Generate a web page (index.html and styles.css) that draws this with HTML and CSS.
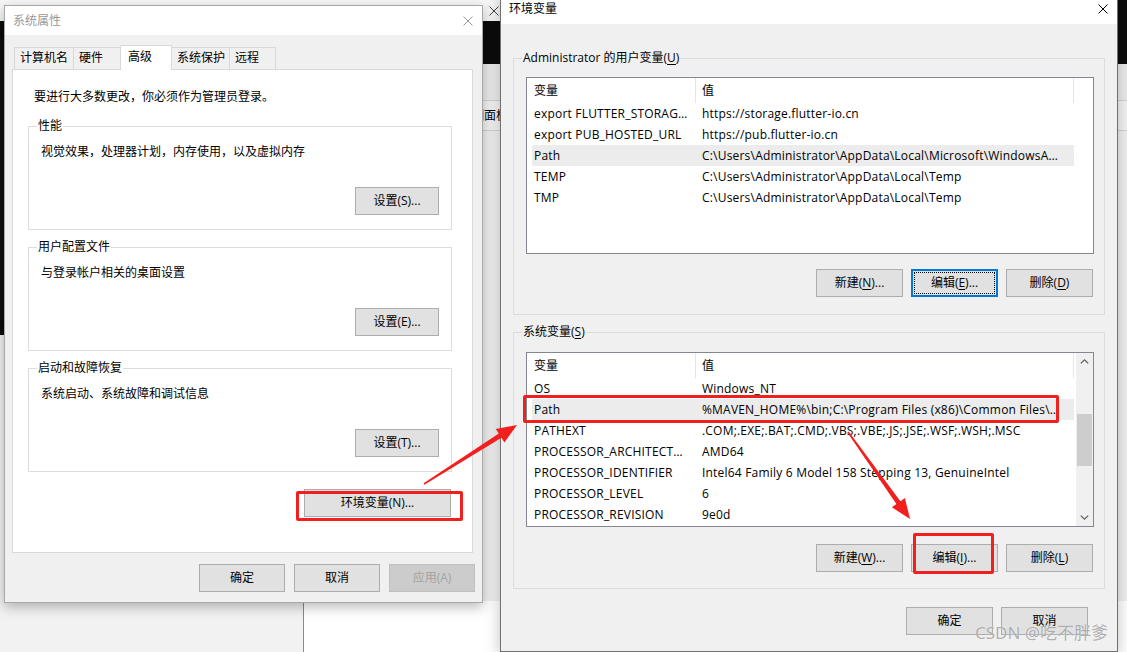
FILE: index.html
```html
<!DOCTYPE html>
<html lang="zh-CN">
<head>
  <meta charset="UTF-8">
  <title>环境变量</title>
  <link rel="stylesheet" href="styles.css">
</head>
<body>
  <!-- windows behind the dialogs -->
  <div class="bg-top">
    <svg class="x-icon" viewBox="0 0 10 10"><path d="M0.5 0.5L9.5 9.5M9.5 0.5L0.5 9.5" stroke="currentColor" fill="none"/></svg>
  </div>
  <div class="bg-band"></div>
  <div class="bg-console"></div>
  <div class="bg-corner"></div>
  <div class="bg-explorer">
    <div class="explorer-bar"></div>
    <div class="explorer-crumb">控制面板</div>
    <div class="explorer-side"></div>
  </div>

  <!-- 系统属性 -->
  <div class="dialog sysprop">
    <div class="titlebar">
      <span class="title">系统属性</span>
      <svg class="x-icon" viewBox="0 0 10 10"><path d="M0.5 0.5L9.5 9.5M9.5 0.5L0.5 9.5" stroke="currentColor" fill="none"/></svg>
    </div>
    <div class="dlg-body">
      <div class="tabs">
        <div class="tab" style="width:60px">计算机名</div>
        <div class="tab" style="width:48px">硬件</div>
        <div class="tab active" style="width:52px">高级</div>
        <div class="tab" style="width:59px">系统保护</div>
        <div class="tab" style="width:47px">远程</div>
      </div>
      <div class="tab-panel">
        <div class="note">要进行大多数更改，你必须作为管理员登录。</div>

        <div class="group">
          <span class="group-label">性能</span>
          <div class="group-text">视觉效果，处理器计划，内存使用，以及虚拟内存</div>
          <button class="btn">设置(S)...</button>
        </div>

        <div class="group">
          <span class="group-label">用户配置文件</span>
          <div class="group-text">与登录帐户相关的桌面设置</div>
          <button class="btn">设置(E)...</button>
        </div>

        <div class="group">
          <span class="group-label">启动和故障恢复</span>
          <div class="group-text">系统启动、系统故障和调试信息</div>
          <button class="btn">设置(T)...</button>
        </div>

        <div class="env-row">
          <button class="btn btn-env">环境变量(N)...</button>
        </div>
      </div>
      <div class="dlg-buttons">
        <button class="btn">确定</button>
        <button class="btn">取消</button>
        <button class="btn" disabled>应用(A)</button>
      </div>
    </div>
  </div>

  <!-- 环境变量 -->
  <div class="dialog envvars">
    <div class="titlebar">
      <span class="title">环境变量</span>
      <svg class="x-icon" viewBox="0 0 10 10"><path d="M0.5 0.5L9.5 9.5M9.5 0.5L0.5 9.5" stroke="currentColor" fill="none"/></svg>
    </div>
    <div class="dlg-body">
      <div class="var-group">
        <span class="group-label">Administrator 的用户变量(<u>U</u>)</span>
        <div class="listview">
          <div class="lv-main">
            <div class="lv-head"><span class="cell c-name">变量</span><span class="cell c-value">值</span></div>
            <div class="lv-row"><span class="c-name">export FLUTTER_STORAG…</span><span class="c-value">https://storage.flutter-io.cn</span></div>
            <div class="lv-row"><span class="c-name">export PUB_HOSTED_URL</span><span class="c-value">https://pub.flutter-io.cn</span></div>
            <div class="lv-row hl"><span class="c-name">Path</span><span class="c-value">C:\Users\Administrator\AppData\Local\Microsoft\WindowsA…</span></div>
            <div class="lv-row"><span class="c-name">TEMP</span><span class="c-value">C:\Users\Administrator\AppData\Local\Temp</span></div>
            <div class="lv-row"><span class="c-name">TMP</span><span class="c-value">C:\Users\Administrator\AppData\Local\Temp</span></div>
          </div>
        </div>
        <div class="var-buttons">
          <button class="btn">新建(<u>N</u>)...</button>
          <button class="btn default">编辑(<u>E</u>)...</button>
          <button class="btn">删除(<u>D</u>)</button>
        </div>
      </div>

      <div class="var-group">
        <span class="group-label">系统变量(<u>S</u>)</span>
        <div class="listview">
          <div class="lv-main">
            <div class="lv-head"><span class="cell c-name">变量</span><span class="cell c-value">值</span></div>
            <div class="lv-row"><span class="c-name">OS</span><span class="c-value">Windows_NT</span></div>
            <div class="lv-row hl"><span class="c-name">Path</span><span class="c-value">%MAVEN_HOME%\bin;C:\Program Files (x86)\Common Files\…</span></div>
            <div class="lv-row"><span class="c-name">PATHEXT</span><span class="c-value">.COM;.EXE;.BAT;.CMD;.VBS;.VBE;.JS;.JSE;.WSF;.WSH;.MSC</span></div>
            <div class="lv-row"><span class="c-name">PROCESSOR_ARCHITECT…</span><span class="c-value">AMD64</span></div>
            <div class="lv-row"><span class="c-name">PROCESSOR_IDENTIFIER</span><span class="c-value">Intel64 Family 6 Model 158 Stepping 13, GenuineIntel</span></div>
            <div class="lv-row"><span class="c-name">PROCESSOR_LEVEL</span><span class="c-value">6</span></div>
            <div class="lv-row"><span class="c-name">PROCESSOR_REVISION</span><span class="c-value">9e0d</span></div>
          </div>
          <div class="scrollbar">
            <div class="sb-arrow"><svg width="9" height="5" viewBox="0 0 9 5"><path d="M0.8 4.4L4.5 0.9L8.2 4.4" fill="none" stroke="#606060" stroke-width="1.3"/></svg></div>
            <div class="sb-track"><div class="sb-thumb"></div></div>
            <div class="sb-arrow"><svg width="9" height="5" viewBox="0 0 9 5"><path d="M0.8 0.6L4.5 4.1L8.2 0.6" fill="none" stroke="#606060" stroke-width="1.3"/></svg></div>
          </div>
        </div>
        <div class="var-buttons">
          <button class="btn">新建(<u>W</u>)...</button>
          <button class="btn">编辑(<u>I</u>)...</button>
          <button class="btn">删除(<u>L</u>)</button>
        </div>
      </div>

      <div class="env-footer">
        <button class="btn">确定</button>
        <button class="btn">取消</button>
      </div>
    </div>
  </div>

  <!-- annotations -->
  <div class="mark mark-env"></div>
  <div class="mark mark-path"></div>
  <div class="mark mark-edit"></div>
  <svg class="arrows" viewBox="0 0 1127 652">
    <polygon points="424.4,484.7 501.4,437.8 504.4,442.5 517,425 495.8,428.9 498.8,433.6 423.6,483.3"/>
    <polygon points="847.3,432.5 896.4,504.1 891.9,507.3 910,519 904.9,498.1 900.4,501.3 848.7,431.5"/>
  </svg>
  <div class="watermark">CSDN @吃不胖爹</div>
</body>
</html>
```

FILE: styles.css
```css
* {
  box-sizing: border-box;
}

body {
  margin: 0;
  width: 1127px;
  height: 652px;
  position: relative;
  overflow: hidden;
  background: #f2f2f2;
  font-family: "Open Sans", "Noto Sans CJK SC", sans-serif;
  font-size: 12px;
  line-height: 16px;
  color: #000;
}

u {
  text-decoration-thickness: 1px;
  text-underline-offset: 2px;
}

/* windows behind */
.bg-top {
  position: absolute;
  left: 0;
  top: 0;
  width: 500px;
  height: 21px;
  background: #f7f7f7;
  display: flex;
  justify-content: flex-end;
  align-items: center;
  padding-right: 1px;
  color: #444;
}

.bg-band {
  position: absolute;
  left: 0;
  top: 21px;
  width: 1127px;
  height: 43px;
  background: #0c0c0c;
}

.bg-console {
  position: absolute;
  left: 0;
  top: 21px;
  width: 60px;
  height: 314px;
  background: #0c0c0c;
}

.bg-corner {
  position: absolute;
  left: 1110px;
  top: 0;
  width: 17px;
  height: 21px;
  background: #0c0c0c;
}

.bg-explorer {
  position: absolute;
  left: 303px;
  top: 64px;
  width: 824px;
  height: 588px;
  background: #fff;
  border-left: 1px solid #8a8a8a;
}

.explorer-bar {
  height: 37px;
  background: #ececec;
  border-bottom: 1px solid #d2d2d2;
}

.explorer-crumb {
  height: 30px;
  line-height: 29px;
  padding-left: 156px;
  font-size: 12px;
  background: #f3f3f3;
  border-bottom: 1px solid #d2d2d2;
}

.explorer-side {
  height: 470px;
  background: #f0f0f0;
}

/* dialogs */
.dialog {
  position: absolute;
  display: flex;
  flex-direction: column;
  background: #f0f0f0;
}

.titlebar {
  flex: none;
  display: flex;
  align-items: center;
  justify-content: space-between;
  background: #fff;
}

.x-icon {
  width: 10px;
  height: 10px;
}

.btn {
  height: 28px;
  padding: 0;
  border: 1px solid #adadad;
  background: #e1e1e1;
  color: #000;
  font: inherit;
  line-height: 26px;
}

.btn:disabled {
  background: #cccccc;
  border-color: #bfbfbf;
  color: #a3a3a3;
}

.btn.default {
  border-color: #0078d7;
  box-shadow: inset 0 0 0 1px #0078d7;
  outline: 1px dotted #000;
  outline-offset: -4px;
}

/* 系统属性 */
.sysprop {
  left: 4px;
  top: 5px;
  width: 479px;
  height: 598px;
  border: 1px solid #a8a8a8;
  box-shadow: 0 4px 12px rgba(0, 0, 0, 0.28);
}

.sysprop .titlebar {
  height: 29px;
  padding: 0 9px 0 8px;
  color: #999;
}

.sysprop .dlg-body {
  flex: 1;
  display: flex;
  flex-direction: column;
  padding: 10px 7px;
}

.tabs {
  display: flex;
  align-items: flex-end;
  height: 24px;
  padding-left: 2px;
}

.tab {
  height: 22px;
  line-height: 20px;
  padding-left: 5px;
  border: 1px solid #d9d9d9;
  border-bottom: none;
  margin-right: -1px;
  background: #f0f0f0;
  white-space: nowrap;
}

.tab.active {
  height: 25px;
  line-height: 22px;
  padding-left: 7px;
  margin-bottom: -1px;
  background: #fff;
  position: relative;
  z-index: 1;
}

.tab-panel {
  width: 461px;
  height: 484px;
  background: #fff;
  border: 1px solid #d9d9d9;
  padding: 0 20px 0 15px;
  display: flex;
  flex-direction: column;
}

.note {
  margin-top: 19px;
  padding-left: 6px;
}

.group {
  position: relative;
  height: 104px;
  margin-top: 17px;
  border: 1px solid #dcdcdc;
  padding: 17px 12px 14px 12px;
  display: flex;
  flex-direction: column;
}

.note + .group {
  margin-top: 21px;
}

.group-label {
  position: absolute;
  top: -9px;
  left: 8px;
  padding: 0 1px;
  background: #fff;
  white-space: nowrap;
}

.group .btn {
  margin-top: auto;
  align-self: flex-end;
  width: 84px;
}

.env-row {
  margin-top: 17px;
  display: flex;
  justify-content: flex-end;
  padding-right: 1px;
}

.btn-env {
  width: 147px;
}

.dlg-buttons {
  margin-top: 11px;
  display: flex;
  justify-content: flex-end;
  gap: 9px;
}

.dlg-buttons .btn {
  width: 86px;
}

/* 环境变量 */
.envvars {
  left: 500px;
  top: -8px;
  width: 618px;
  height: 660px;
  border: 1px solid #707070;
  box-shadow: 0 4px 14px rgba(0, 0, 0, 0.25);
}

.envvars .titlebar {
  height: 31px;
  padding: 0 9px 0 8px;
}

.envvars .dlg-body {
  flex: 1;
  display: flex;
  flex-direction: column;
  padding: 34px 12px 16px 12px;
}

.var-group {
  position: relative;
  height: 257px;
  border: 1px solid #dcdcdc;
  padding: 18px 10px 17px 12px;
  display: flex;
  flex-direction: column;
}

.var-group + .var-group {
  margin-top: 17px;
  padding-top: 19px;
  padding-bottom: 16px;
}

.var-group .group-label {
  background: #f0f0f0;
}

.listview {
  width: 568px;
  height: 177px;
  border: 1px solid #828790;
  background: #fff;
  display: flex;
}

.var-group + .var-group .listview {
  height: 175px;
}

.lv-main {
  flex: 1;
  overflow: hidden;
}

.lv-head {
  display: flex;
  height: 25px;
  line-height: 25px;
}

.lv-head .cell {
  border-right: 1px solid #e5e5e5;
}

.lv-head .c-name {
  width: 169px;
  padding-left: 7px;
}

.lv-head .c-value {
  width: 378px;
  padding-left: 6px;
}

.lv-row {
  display: flex;
  width: 542px;
  height: 21px;
  line-height: 21px;
  margin-left: 5px;
  white-space: nowrap;
  letter-spacing: 0.2px;
}

.lv-row .c-name {
  width: 170px;
  padding-left: 2px;
  overflow: hidden;
}

.lv-row .c-value {
  flex: 1;
  overflow: hidden;
}

.lv-row.hl {
  background: #ececec;
}

.scrollbar {
  width: 17px;
  background: #f0f0f0;
  display: flex;
  flex-direction: column;
}

.sb-arrow {
  height: 17px;
  display: flex;
  align-items: center;
  justify-content: center;
}

.sb-track {
  flex: 1;
  padding: 44px 1px 0 1px;
}

.sb-thumb {
  height: 52px;
  background: #cdcdcd;
}

.var-buttons {
  margin-top: 15px;
  display: flex;
  justify-content: flex-end;
  gap: 8px;
  padding-right: 1px;
}

.var-group + .var-group .var-buttons {
  margin-top: 17px;
}

.var-buttons .btn {
  width: 87px;
}

.env-footer {
  margin-top: 18px;
  display: flex;
  justify-content: flex-end;
  gap: 8px;
  padding-right: 17px;
}

.env-footer .btn {
  width: 87px;
}

/* annotations */
.mark {
  position: absolute;
  border: 3px solid #f21f1f;
  border-radius: 2px;
}

.mark-env {
  left: 296px;
  top: 491px;
  width: 167px;
  height: 30px;
}

.mark-path {
  left: 523px;
  top: 395px;
  width: 536px;
  height: 28px;
}

.mark-edit {
  left: 913px;
  top: 533px;
  width: 81px;
  height: 41px;
}

.arrows {
  position: absolute;
  left: 0;
  top: 0;
  width: 1127px;
  height: 652px;
  fill: #f21f1f;
  pointer-events: none;
}

.watermark {
  position: absolute;
  left: 975px;
  top: 622px;
  font-family: "Noto Sans", "Noto Sans CJK SC", sans-serif;
  font-size: 17px;
  line-height: 22px;
  color: rgba(120, 120, 120, 0.6);
  text-shadow: 0 0 1px #fff;
  white-space: nowrap;
}
```
